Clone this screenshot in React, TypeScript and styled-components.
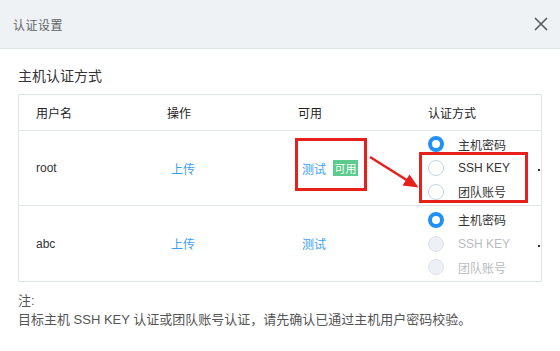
import React from 'react';
import styled, { createGlobalStyle } from 'styled-components';

const GlobalStyle = createGlobalStyle`
	html, body {
		margin: 0;
		padding: 0;
		background: #ffffff;
	}
	body {
		font-family: "Liberation Sans", "Noto Sans CJK SC", sans-serif;
		color: #333;
	}
`;

const Modal = styled.div`
	width: 560px;
	height: 351px;
	background: #fff;
	overflow: hidden;
`;

const Header = styled.div`
	box-sizing: border-box;
	height: 49px;
	display: flex;
	align-items: center;
	justify-content: space-between;
	padding: 0 12px 0 13px;
	background: #eef2f4;
	border-bottom: 1px solid #e1e6ea;
`;

const HeaderTitle = styled.span`
	font-size: 12px;
	color: #5f6366;
	letter-spacing: 0.5px;
`;

const CloseButton = styled.button`
	width: 14px;
	height: 14px;
	padding: 0;
	border: 0;
	background: none;
	display: flex;
	cursor: pointer;
`;

const Body = styled.div`
	padding: 17px 18px 0;
`;

const SectionTitle = styled.div`
	font-size: 14px;
	line-height: 20px;
	color: #333;
	margin-bottom: 8px;
`;

const Table = styled.div`
	position: relative;
	border: 1px solid #dfe5ea;
`;

const Row = styled.div<{ $height: number; $last?: boolean }>`
	box-sizing: border-box;
	display: grid;
	grid-template-columns: 131px 131px 130px 1fr;
	height: ${p => p.$height}px;
	border-bottom: ${p => (p.$last ? 'none' : '1px solid #dfe5ea')};
`;

const Cell = styled.div<{ $head?: boolean }>`
	display: flex;
	align-items: center;
	padding-left: 17px;
	font-size: 12px;
	color: ${p => (p.$head ? '#222' : '#333')};
`;

const AuthCell = styled(Cell)`
	padding-right: 1px;
`;

const Link = styled.a`
	color: #3a9ef5;
	font-size: 12px;
	margin-left: 4px;
	cursor: pointer;
`;

const Badge = styled.span`
	display: inline-flex;
	align-items: center;
	justify-content: center;
	width: 25px;
	height: 16px;
	margin-left: 7px;
	background: #5ccb8f;
	color: #fff;
	font-size: 11px;
`;

const RadioGroup = styled.div`
	display: flex;
	flex-direction: column;
`;

const RadioItem = styled.label<{ $disabled?: boolean }>`
	display: flex;
	align-items: center;
	height: 23.6px;
	gap: 14px;
	font-size: 12px;
	color: ${p => (p.$disabled ? '#b9bcc0' : '#333')};
`;

const RadioCircle = styled.span<{ $checked?: boolean; $disabled?: boolean }>`
	box-sizing: border-box;
	width: 16px;
	height: 16px;
	border-radius: 50%;
	background: ${p => (p.$disabled ? '#edf0f4' : '#fff')};
	border: ${p =>
		p.$checked ? '4px solid #2191f5' : p.$disabled ? '1px solid #dde3ea' : '1px solid #c9d3dd'};
`;

const Dot = styled.span`
	width: 2px;
	height: 2px;
	margin-left: auto;
	margin-top: 4px;
	background: #333;
`;

const Overlay = styled.svg`
	position: absolute;
	top: -1px;
	left: -1px;
	pointer-events: none;
	overflow: visible;
`;

const Note = styled.div`
	margin-top: 9px;
	font-size: 13px;
	line-height: 19px;
	color: #555;
`;

interface IRadioOption {
	label: string;
	checked?: boolean;
	disabled?: boolean;
}

const AuthRadios = ({ options }: { options: IRadioOption[] }) => (
	<RadioGroup>
		{options.map(o => (
			<RadioItem key={o.label} $disabled={o.disabled}>
				<RadioCircle $checked={o.checked} $disabled={o.disabled} />
				{o.label}
			</RadioItem>
		))}
	</RadioGroup>
);

const App = () => {
	return (
		<Modal>
			<GlobalStyle />
			<Header>
				<HeaderTitle>认证设置</HeaderTitle>
				<CloseButton aria-label='close'>
					<svg width='14' height='14' viewBox='0 0 14 14'>
						<path d='M1 1L13 13M13 1L1 13' stroke='#555' strokeWidth='1.5' />
					</svg>
				</CloseButton>
			</Header>
			<Body>
				<SectionTitle>主机认证方式</SectionTitle>
				<Table>
					<Row $height={36}>
						<Cell $head>用户名</Cell>
						<Cell $head>操作</Cell>
						<Cell $head>可用</Cell>
						<Cell $head>认证方式</Cell>
					</Row>
					<Row $height={75}>
						<Cell>root</Cell>
						<Cell><Link>上传</Link></Cell>
						<Cell><Link>测试</Link><Badge>可用</Badge></Cell>
						<AuthCell>
							<AuthRadios
								options={[
									{ label: '主机密码', checked: true },
									{ label: 'SSH KEY' },
									{ label: '团队账号' }
								]}
							/>
							<Dot />
						</AuthCell>
					</Row>
					<Row $height={75} $last>
						<Cell>abc</Cell>
						<Cell><Link>上传</Link></Cell>
						<Cell><Link>测试</Link></Cell>
						<AuthCell>
							<AuthRadios
								options={[
									{ label: '主机密码', checked: true },
									{ label: 'SSH KEY', disabled: true },
									{ label: '团队账号', disabled: true }
								]}
							/>
							<Dot />
						</AuthCell>
					</Row>
					<Overlay width='524' height='187' viewBox='18 94 524 187'>
						<rect x='296.5' y='139.5' width='69' height='50' fill='none' stroke='#e6211c' strokeWidth='3' />
						<rect x='420.5' y='153.5' width='106' height='48' fill='none' stroke='#e6211c' strokeWidth='3' />
						<line x1='370' y1='157' x2='409' y2='181.5' stroke='#e6211c' strokeWidth='2.5' />
						<polygon points='418.5,187.5 402.5,185.5 409.5,174.5' fill='#e6211c' />
					</Overlay>
				</Table>
				<Note>
					注:<br />
					目标主机 SSH KEY 认证或团队账号认证，请先确认已通过主机用户密码校验。
				</Note>
			</Body>
		</Modal>
	);
};

export default App;
